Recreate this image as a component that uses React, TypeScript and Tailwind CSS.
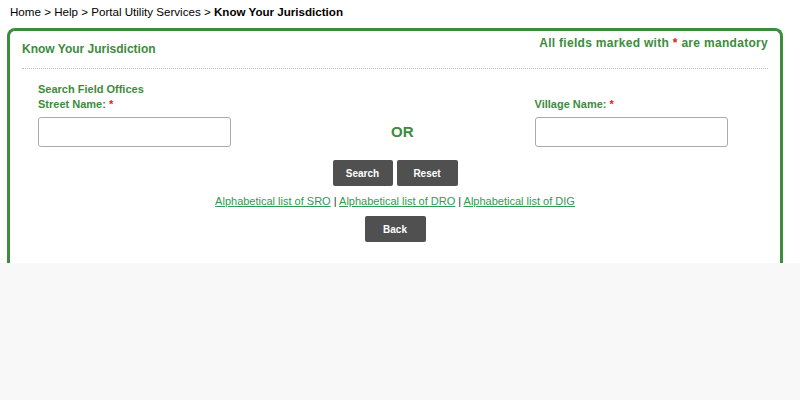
export default function App() {
  const green = 'text-[#3d8b3d]'

  return (
    <div className="w-[800px] h-[400px] bg-[#f8f8f8] flex flex-col font-['Liberation_Sans',Arial,sans-serif]">
      <div className="bg-white">
        {/* Breadcrumb */}
        <div className="h-[28px] pl-[10px] pt-[4px] text-[11.6px] leading-[16px] text-black">
          Home &gt; Help &gt; Portal Utility Services &gt; <b>Know Your Jurisdiction</b>
        </div>

        {/* Panel */}
        <div className="ml-[7px] w-[776px] h-[235px] border-[3px] border-b-0 border-[#3d8b3d] rounded-t-[8px] bg-white">
          <div className="flex justify-between items-start px-[12px]">
            <h1 className={`mt-[10px] text-[12px] leading-[16px] font-bold ${green}`}>Know Your Jurisdiction</h1>
            <p className={`mt-[5px] text-[12px] leading-[14px] font-bold tracking-[0.3px] ${green}`}>
              All fields marked with <span className="text-[#d22]">*</span> are mandatory
            </p>
          </div>
          <div className="mx-[12px] mt-[11px] border-b border-dotted border-[#bbb]" />

          <div className="mt-[13px] pl-[28px]">
            <p className={`text-[11px] leading-[15px] font-bold ${green}`}>Search Field Offices</p>
            <div className="flex items-start">
              <div className="w-[193px]">
                <label className={`block text-[11px] leading-[15px] font-bold ${green}`}>
                  Street Name: <span className="text-[#d22]">*</span>
                </label>
                <input className="mt-[5px] w-[193px] h-[30px] border-[1.5px] border-[#aaa] rounded-[3px] bg-white outline-none px-2 text-[12px]" />
              </div>
              <div className={`ml-[160px] mt-[26px] text-[15px] leading-[18px] font-bold ${green}`}>OR</div>
              <div className="w-[193px] ml-[121px]">
                <label className={`block text-[11px] leading-[15px] font-bold ${green}`}>
                  Village Name: <span className="text-[#d22]">*</span>
                </label>
                <input className="mt-[5px] w-[193px] h-[30px] border-[1.5px] border-[#aaa] rounded-[3px] bg-white outline-none px-2 text-[12px]" />
              </div>
            </div>
          </div>

          <div className="flex flex-col items-center">
            <div className="mt-[13px] flex gap-[4px]">
              <button className="w-[60px] h-[26px] bg-[#505050] rounded-[2px] text-white text-[10px] font-bold">Search</button>
              <button className="w-[61px] h-[26px] bg-[#505050] rounded-[2px] text-white text-[10px] font-bold">Reset</button>
            </div>
            <p className="mt-[8px] text-[11px] leading-[14px] text-[#333]">
              <a href="#" className="text-[#2e9a55] underline">Alphabetical list of SRO</a> |{' '}
              <a href="#" className="text-[#2e9a55] underline">Alphabetical list of DRO</a> |{' '}
              <a href="#" className="text-[#2e9a55] underline">Alphabetical list of DIG</a>
            </p>
            <button className="mt-[8px] w-[61px] h-[26px] bg-[#505050] rounded-[2px] text-white text-[10px] font-bold">Back</button>
          </div>
        </div>
      </div>
    </div>
  )
}
